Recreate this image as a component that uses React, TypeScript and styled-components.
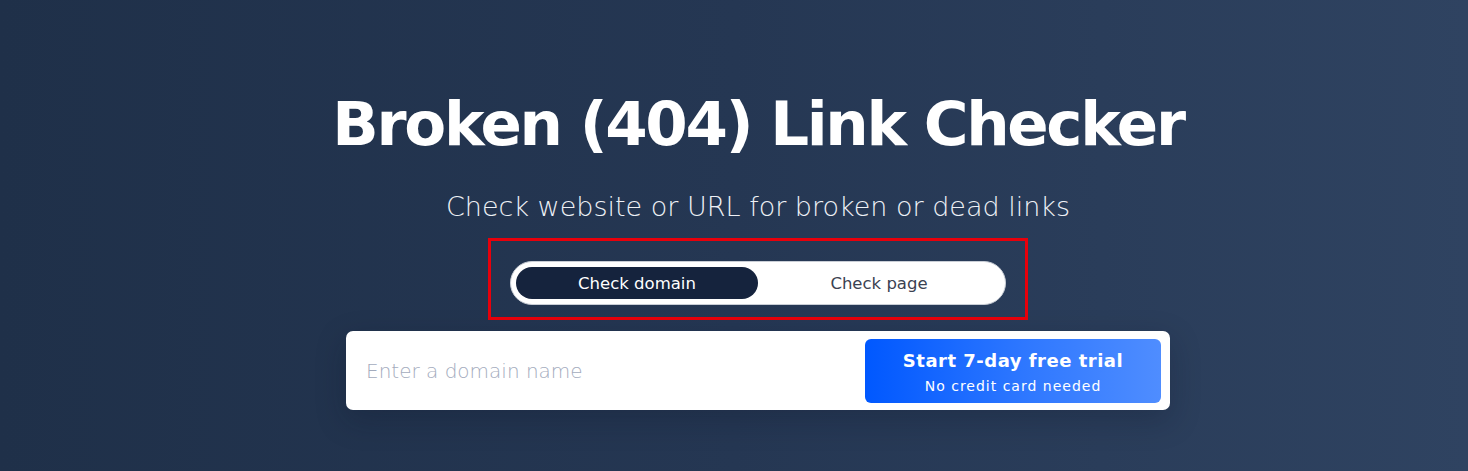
import styled, { createGlobalStyle } from "styled-components";

const GlobalStyle = createGlobalStyle`
  html, body {
    margin: 0;
    padding: 0;
  }
  body {
    font-family: "DejaVu Sans", "Liberation Sans", sans-serif;
  }
`;

const Hero = styled.section`
  box-sizing: border-box;
  width: 100%;
  height: 471px;
  padding: 84px 0 0 48px;
  display: flex;
  flex-direction: column;
  align-items: center;
  background: linear-gradient(90deg, #1f3049 0%, #253753 50%, #2f4361 100%);
`;

const Title = styled.h1`
  margin: 0;
  font-family: "DejaVu Sans", sans-serif;
  font-weight: 700;
  font-size: 61px;
  line-height: 80px;
  color: #fff;
  letter-spacing: -2.3px;
`;

const Subtitle = styled.p`
  margin: 26px 0 0;
  font-family: "DejaVu Sans", sans-serif;
  font-weight: 300;
  font-size: 27px;
  line-height: 34px;
  color: #eef1f6;
`;

const Highlight = styled.div`
  margin-top: 14px;
  box-sizing: border-box;
  width: 540px;
  height: 82px;
  padding-top: 8px;
  border: 3px solid #e8000b;
  display: flex;
  align-items: center;
  justify-content: center;
`;

const Toggle = styled.div`
  box-sizing: border-box;
  width: 496px;
  height: 44px;
  padding: 5px;
  border-radius: 22px;
  background: #fff;
  border: 1px solid #c9ced6;
  display: flex;
`;

const ToggleOption = styled.button<{ $active: boolean }>`
  flex: 1;
  border: none;
  border-radius: 17px;
  font-family: "DejaVu Sans", sans-serif;
  font-size: 16.5px;
  font-weight: 400;
  color: ${({ $active }) => ($active ? "#fff" : "#3b4252")};
  background: ${({ $active }) => ($active ? "#15233d" : "transparent")};
  cursor: pointer;
`;

const SearchCard = styled.form`
  margin-top: 11px;
  box-sizing: border-box;
  width: 824px;
  height: 79px;
  padding: 8px 9px 7px 18px;
  background: #fff;
  border-radius: 7px;
  display: flex;
  align-items: stretch;
  box-shadow: 0 10px 30px rgba(10, 20, 40, 0.25);
`;

const DomainInput = styled.input`
  flex: 1;
  min-width: 0;
  border: none;
  outline: none;
  font-family: "DejaVu Sans", sans-serif;
  font-weight: 300;
  font-size: 20px;
  color: #222;
  background: transparent;

  &::placeholder {
    color: #a3abbd;
  }
`;

const TrialButton = styled.button`
  width: 296px;
  padding-top: 3px;
  border: none;
  border-radius: 6px;
  background: linear-gradient(90deg, #0058ff 0%, #2f78ff 55%, #4f8dff 100%);
  color: #fff;
  display: flex;
  flex-direction: column;
  align-items: center;
  justify-content: center;
  gap: 7px;
  cursor: pointer;
`;

const TrialLabel = styled.span`
  font-family: "DejaVu Sans", sans-serif;
  font-weight: 700;
  font-size: 18px;
  letter-spacing: 0.5px;
`;

const TrialNote = styled.span`
  font-family: "DejaVu Sans", sans-serif;
  font-size: 14px;
  letter-spacing: 1px;
`;

export default function App() {
  return (
    <>
      <GlobalStyle />
      <Hero>
        <Title>Broken (404) Link Checker</Title>
        <Subtitle>Check website or URL for broken or dead links</Subtitle>
        <Highlight>
          <Toggle>
            <ToggleOption type="button" $active>
              Check domain
            </ToggleOption>
            <ToggleOption type="button" $active={false}>
              Check page
            </ToggleOption>
          </Toggle>
        </Highlight>
        <SearchCard onSubmit={(e) => e.preventDefault()}>
          <DomainInput placeholder="Enter a domain name" />
          <TrialButton type="submit">
            <TrialLabel>Start 7-day free trial</TrialLabel>
            <TrialNote>No credit card needed</TrialNote>
          </TrialButton>
        </SearchCard>
      </Hero>
    </>
  );
}
